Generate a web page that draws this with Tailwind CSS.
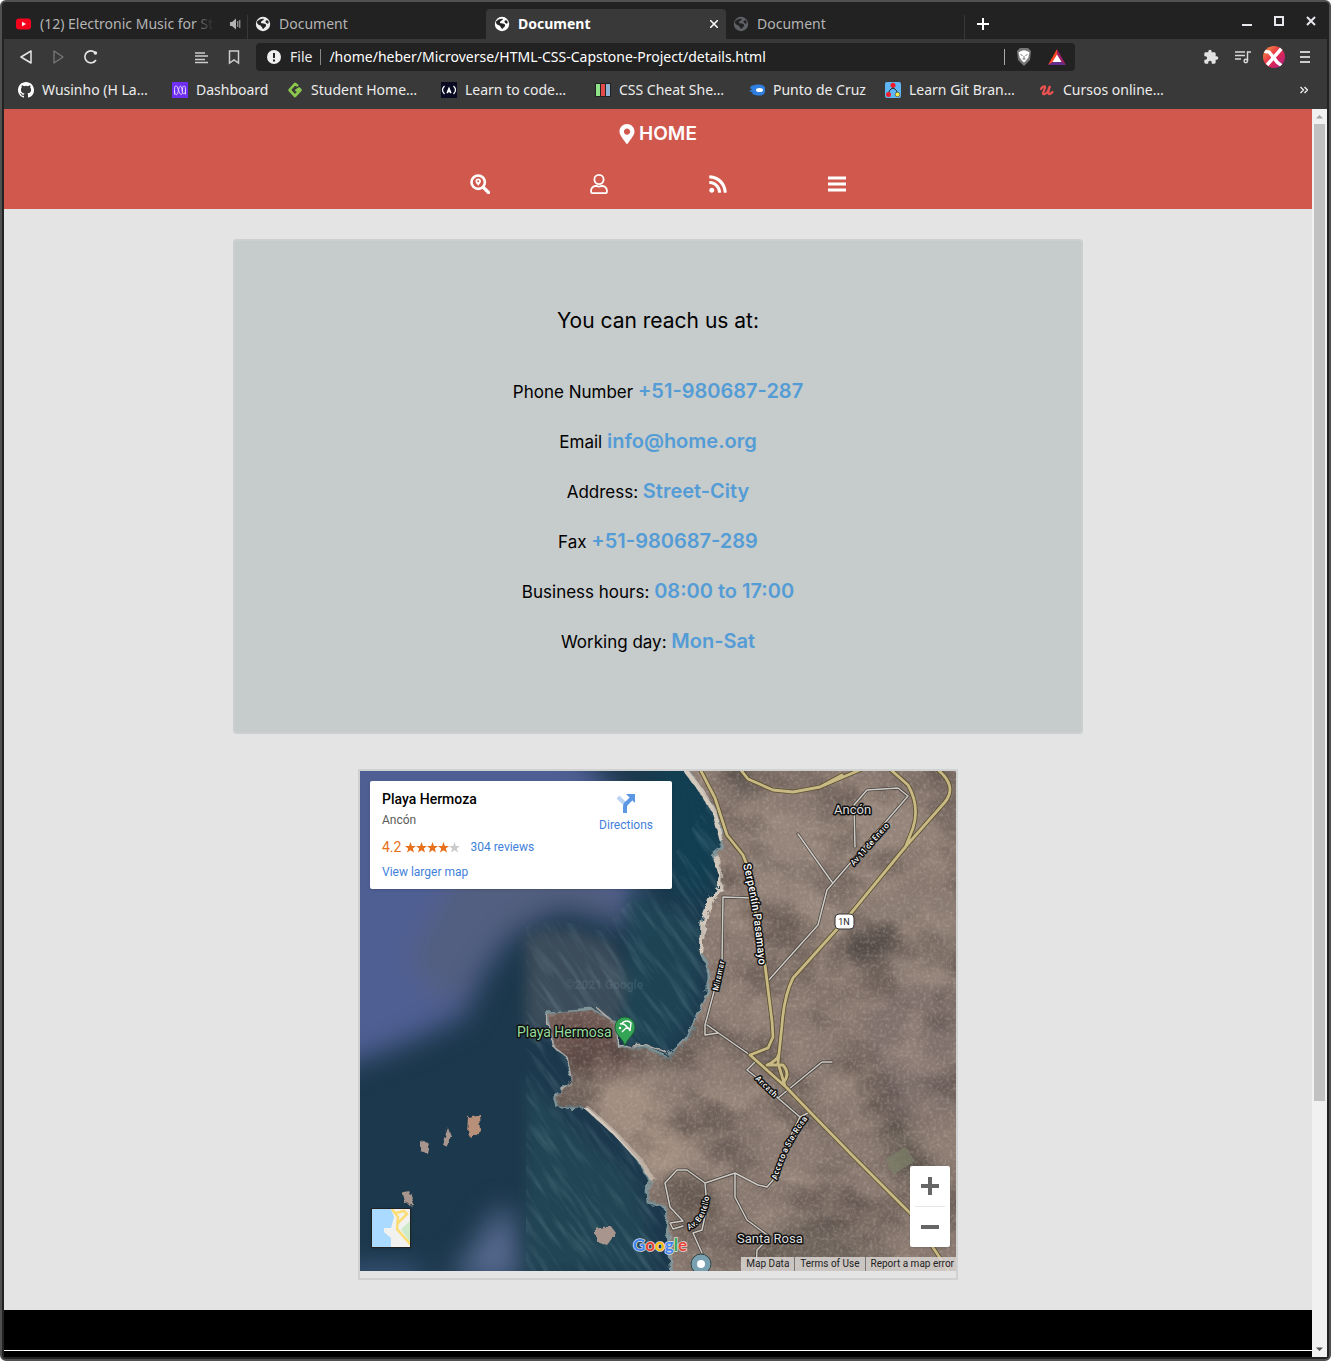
<!DOCTYPE html>
<html lang="en">
<head>
<meta charset="utf-8">
<title>Document</title>
<script src="https://cdn.jsdelivr.net/npm/@tailwindcss/browser@4"></script>
</head>
<body class="bg-white">
<svg class="hidden" aria-hidden="true">
  <symbol id="globe" viewBox="0 0 16 16"><circle cx="8" cy="8" r="7.2" fill="currentColor"/><path d="M2 5.500C4 3.500 7 2 9 3c-.5 1.500-3.500 2-3 4 1.500.8 4.500 0 5 2s-2 2.500-2.500 4c-1.500-.5-1.500-2.500-3-3.500S2 9 2 5.500zM10.500 5c1-1 2.500-.8 3 .5.5 1.500 0 2-1 2.200-1-.3-2.200-1.400-2-2.700z" fill="#222"/></symbol>
</svg>
<div class="flex min-h-screen flex-col rounded-md border-2 border-[#4f5050] bg-[#222] pr-[2px] pb-[2px] pl-[2px] font-['Noto_Sans',sans-serif]">

  <!-- Tab strip -->
  <div class="flex h-[37px] items-end text-sm text-[#b4b4b4]">
    <button class="flex h-[30px] w-[243px] items-center gap-2 pr-1 pl-3 text-left">
      <svg class="h-4 w-4 shrink-0" viewBox="0 0 16 16"><rect x="0" y="2.500" width="15" height="11" rx="3" fill="#f5001d"/><path d="M6 5.700v4.600L10 8z" fill="#fff"/></svg>
      <span class="min-w-0 flex-1 whitespace-nowrap">(12) Electronic Music for <span class="bg-gradient-to-r from-[#777] to-[#2c2c2c] bg-clip-text text-transparent">St</span></span>
      <svg class="h-4 w-4 shrink-0" viewBox="0 0 16 16" fill="none" stroke="#b4b4b4"><path d="M3 6h2l4-3.500v11L5 10H3z" fill="#b4b4b4" stroke="none"/><path d="M10.800 5v6M12.800 4v8"/></svg>
    </button>
    <span class="h-6 w-px bg-[#383838]"></span>
    <button class="flex h-[30px] w-[238px] items-center gap-2 pl-[7px]">
      <svg class="h-4 w-4 text-[#ececec]"><use href="#globe"/></svg>Document
    </button>
    <button class="flex h-[30px] w-[240px] items-center gap-2 rounded-t bg-[#393939] pr-2 pl-2 font-bold text-white">
      <svg class="h-4 w-4 text-white"><use href="#globe"/></svg><span class="flex-1 text-left">Document</span>
      <svg class="h-2 w-2" viewBox="0 0 8 8" stroke="#fff" stroke-width="1.500"><path d="M0 0l8 8M8 0L0 8"/></svg>
    </button>
    <button class="flex h-[30px] w-[238px] items-center gap-2 pl-[7px]">
      <svg class="h-4 w-4 text-[#5d6064]"><use href="#globe"/></svg>Document
    </button>
    <span class="h-6 w-px bg-[#383838]"></span>
    <button class="flex h-[30px] w-9 items-center justify-center" aria-label="New tab"><svg class="h-3 w-3" viewBox="0 0 12 12" stroke="#fff" stroke-width="2"><path d="M6 0v12M0 6h12"/></svg></button>
    <div class="ml-auto flex h-full items-center gap-[22px] pr-[11px]">
      <button aria-label="Minimize"><svg class="h-[10px] w-[10px]" viewBox="0 0 10 10" stroke="#e6e8ee" stroke-width="2"><path d="M0 9h10"/></svg></button>
      <button aria-label="Maximize"><svg class="h-[10px] w-[10px]" viewBox="0 0 10 10" fill="none" stroke="#e6e8ee" stroke-width="2"><path d="M1 1h8v8H1z"/></svg></button>
      <button aria-label="Close"><svg class="h-[10px] w-[10px]" viewBox="0 0 10 10" stroke="#e6e8ee" stroke-width="2"><path d="M1 1l8 8M9 1L1 9"/></svg></button>
    </div>
  </div>

  <!-- Toolbar -->
  <div class="flex h-9 items-center bg-[#393939] pr-[14px] pl-4">
    <div class="flex w-[236px] items-center">
      <button class="w-8" aria-label="Back"><svg class="h-4 w-4" viewBox="0 0 16 16" fill="none" stroke="#e5e5e5" stroke-width="1.500" stroke-linejoin="round"><path d="M11 2v12L1 8z"/></svg></button>
      <button class="w-8" aria-label="Forward"><svg class="h-4 w-4" viewBox="0 0 16 16" fill="none" stroke="#777" stroke-width="1.300" stroke-linejoin="round"><path d="M2 2v12l9-6z"/></svg></button>
      <button aria-label="Reload"><svg class="h-4 w-4" viewBox="0 0 16 16" fill="none" stroke="#e5e5e5" stroke-width="1.600"><path d="M11.500 4A6 6 0 1 0 12 11"/><circle cx="11.400" cy="4" r="1.800" fill="#e5e5e5" stroke="none"/></svg></button>
      <button class="mr-4 ml-auto" aria-label="Reader"><svg class="h-4 w-4" viewBox="0 0 16 16" stroke="#ccc" stroke-width="1.300"><path d="M1 4h10M1 7h13M1 10.500h10M1 13.500h13"/></svg></button>
      <button class="mr-[14px]" aria-label="Bookmark"><svg class="h-4 w-4" viewBox="0 0 16 16" fill="none" stroke="#ccc" stroke-width="1.500"><path d="M3.500 2h9v12L8 10.800 3.500 14z"/></svg></button>
    </div>
    <div class="flex h-7 max-w-[819px] min-w-0 flex-1 items-center rounded bg-[#222] pr-[9px] pl-[10px] text-sm text-[#ededed]">
      <svg class="mr-2 h-4 w-4" viewBox="0 0 16 16"><circle cx="8" cy="8" r="7" fill="#eee"/><path d="M8 4v5M8 10.500v2" stroke="#222" stroke-width="2"/></svg>
      <label for="url">File</label>
      <span class="mx-2 h-4 w-px bg-[#888]"></span>
      <input id="url" class="min-w-0 flex-1 bg-transparent text-white outline-none" value="/home/heber/Microverse/HTML-CSS-Capstone-Project/details.html">
      <span class="mr-[11px] h-4 w-px bg-[#aaa]"></span>
      <button class="mr-4" aria-label="Shields"><svg class="h-[18px] w-4" viewBox="0 0 16 18"><path d="M4 0h8l3 3-1 9-6 6-6-6-1-9z" fill="#777"/><path d="M5 3l3-.7L11 3l2.500 1.500-1.200 5-2.300 3.200L8 14.500 6 12.700 3.700 9.500l-1.200-5z" fill="#fff"/><path d="M4.500 6.500l2 1M11.500 6.500l-2 1M8 8v3M6.500 11h3" stroke="#777"/></svg></button>
      <button aria-label="Rewards"><svg class="h-4 w-[18px]" viewBox="0 0 18 16"><path d="M9 0L0 16l9-5z" fill="#ff4724"/><path d="M9 0l9 16-9-5z" fill="#9e1f63"/><path d="M0 16h18l-5-3H5z" fill="#662d91"/><path d="M9 5.500L13.500 13h-9z" fill="#fff"/></svg></button>
    </div>
    <div class="ml-auto flex items-center gap-4">
      <button aria-label="Extensions"><svg class="h-4 w-4" viewBox="0 0 24 24" fill="#e2e2e2"><path d="M20.500 11H19V7c0-1.100-.9-2-2-2h-4V3.500a2.500 2.500 0 0 0-5 0V5H4c-1.100 0-2 .9-2 2v3.800h1.500a2.700 2.700 0 0 1 0 5.400H2V20c0 1.100.9 2 2 2h3.800v-1.500a2.700 2.700 0 0 1 5.400 0V22H17c1.100 0 2-.9 2-2v-4h1.500a2.500 2.500 0 0 0 0-5z"/></svg></button>
      <button aria-label="Playlist"><svg class="h-4 w-4" viewBox="0 0 16 16" fill="none" stroke="#d8d8d8" stroke-width="1.500"><path d="M0 3h10M0 6.500h10M0 10h6M12.500 12V3H16"/><circle cx="10.800" cy="12" r="1.700"/></svg></button>
      <button class="-mx-1" aria-label="Profile"><svg class="h-[22px] w-[22px]" viewBox="0 0 22 22"><defs><linearGradient id="pf" x2="1" y2="1"><stop stop-color="#f7a63b"/><stop offset=".5" stop-color="#e8274b"/><stop offset="1" stop-color="#a4208c"/></linearGradient><clipPath id="pc"><circle cx="11" cy="11" r="11"/></clipPath></defs><g clip-path="url(#pc)"><path d="M0 0h22v22H0z" fill="url(#pf)"/><path d="M0 5l6 1 5 6 3 4 5 4M19 2L4 19" stroke="#fff" stroke-width="3.500" fill="none"/></g></svg></button>
      <button aria-label="Menu"><svg class="h-4 w-4" viewBox="0 0 16 16" stroke="#ccc" stroke-width="1.800"><path d="M3 3h10M3 8h10M3 13h10"/></svg></button>
    </div>
  </div>

  <!-- Bookmarks bar -->
  <nav class="flex h-[34px] items-center bg-[#393939] pr-[19px] pb-1 pl-[14px] text-sm whitespace-nowrap text-[#ececec]">
    <a href="#" class="flex w-[154px] items-center gap-2"><svg class="h-4 w-4" viewBox="0 0 16 16" fill="#fff"><path d="M8 0C3.580 0 0 3.580 0 8c0 3.540 2.290 6.530 5.470 7.590.4.070.55-.17.55-.38 0-.19-.01-.82-.01-1.490-2.010.37-2.530-.49-2.690-.94-.09-.23-.48-.94-.82-1.130-.28-.15-.68-.52-.01-.53.63-.01 1.080.58 1.230.82.72 1.210 1.870.87 2.330.66.07-.52.28-.87.51-1.070-1.780-.2-3.640-.89-3.640-3.950 0-.87.31-1.590.82-2.150-.08-.2-.36-1.020.08-2.120 0 0 .67-.21 2.200.82a7.600 7.600 0 0 1 4 0c1.530-1.040 2.200-.82 2.200-.82.44 1.100.16 1.920.08 2.120.51.56.82 1.270.82 2.150 0 3.070-1.870 3.750-3.650 3.950.29.25.54.73.54 1.480 0 1.070-.01 1.930-.01 2.200 0 .21.15.46.55.38A8.010 8.010 0 0 0 16 8c0-4.420-3.580-8-8-8z"/></svg>Wusinho (H La…</a>
    <a href="#" class="flex w-[115px] items-center gap-2"><svg class="h-4 w-4" viewBox="0 0 16 16"><path d="M0 0h16v16H0z" fill="#6f2ff2"/><path d="M2.500 12.500V7.500c0-5 2.500-5 3.700 0l1.300 3c1 3 3 2.500 3-1V7c0-4 3-4 3 0v5.500M2.500 8c0 6 3 6 3.700 1.500C7 3.500 9.500 2 10 8c.5 5 3.500 5 3.500 0" fill="none" stroke="#e6dcff" stroke-width=".9"/></svg>Dashboard</a>
    <a href="#" class="flex w-[154px] items-center gap-2"><svg class="h-4 w-4" viewBox="0 0 16 16" fill="none" stroke="#8cc84b" stroke-width="2.600" stroke-linejoin="round"><path d="M11 4L8 1.800 2.500 8 8 14l5.500-6L12 6.500 8.500 9"/></svg>Student Home…</a>
    <a href="#" class="flex w-[154px] items-center gap-2"><svg class="h-4 w-4" viewBox="0 0 16 16" fill="none" stroke="#fff" stroke-width="1.200"><path d="M0 0h16v16H0z" fill="#0a0a23" stroke="none"/><path d="M3.500 4C1 6.500 1 9.500 3.500 12M12.500 4c2.500 2.500 2.500 5.500 0 8"/><path d="M6 11l2-5 2 5-2-2z" fill="#fff"/></svg>Learn to code…</a>
    <a href="#" class="flex w-[154px] items-center gap-2"><svg class="h-4 w-4" viewBox="0 0 16 16"><path d="M0 1h16v14H0z" fill="#222"/><path d="M1 2h4v12H1z" fill="#8fe388"/><path d="M6 2h4v12H6z" fill="#e34b4b"/><path d="M11 2h4v12h-4z" fill="#8db4d6"/></svg>CSS Cheat She…</a>
    <a href="#" class="flex w-[136px] items-center gap-2"><svg class="h-4 w-4" viewBox="0 0 16 16"><path d="M2 4l5-1.500h4a5.500 5.500 0 0 1 0 11H8L3 12l1-1.500L0 9l3-1.500L1 6z" fill="#2e7fe0"/><ellipse cx="10.500" cy="8" rx="3.500" ry="2" fill="#fff"/></svg>Punto de Cruz</a>
    <a href="#" class="flex w-[154px] items-center gap-2"><svg class="h-4 w-4" viewBox="0 0 16 16"><rect width="16" height="16" rx="2" fill="#5fb6f5"/><path d="M8 3v4M8 6c-3 1-4 3-4.500 6M8 6c3 1 4 3 4.500 6" stroke="#222" fill="none"/><circle cx="8" cy="3.200" r="2.500" fill="#f11d28"/><circle cx="3.500" cy="12.500" r="2.500" fill="#f11d28"/><circle cx="12.500" cy="12.500" r="2.300" fill="#f5e94b" stroke="#222" stroke-width=".5"/></svg>Learn Git Bran…</a>
    <a href="#" class="flex items-center gap-2"><svg class="h-4 w-4" viewBox="0 0 16 16" fill="none" stroke="#ec5252" stroke-width="2.200" stroke-linecap="round"><path d="M2 7c1-2 3-3 4-2.500S4 10 4 11.500s3 .8 5-2.500l2-5c-1 3-2 6-1.500 7.500s3-.2 4-1.500"/></svg>Cursos online…</a>
    <button class="ml-auto" aria-label="More bookmarks"><svg class="h-2 w-2" viewBox="0 0 8 8" fill="none" stroke="#eee" stroke-width="1.400"><path d="M.5 1l3 3-3 3M4.500 1l3 3-3 3"/></svg></button>
  </nav>

  <!-- Page viewport -->
  <div class="flex flex-1">
    <div class="flex min-w-0 flex-1 flex-col bg-[#e4e4e4] font-[Inter,sans-serif] text-black">
      <header class="h-[100px] bg-[#d0584c] text-white">
        <a href="#" class="flex h-[50px] items-center justify-center gap-1 text-[19px] font-semibold"><svg class="h-5 w-4" viewBox="0 0 384 512" fill="#fff"><path d="M172.268 501.670C26.970 291.031 0 269.413 0 192 0 85.961 85.961 0 192 0s192 85.961 192 192c0 77.413-26.970 99.031-172.268 309.670-9.535 13.774-29.930 13.773-39.464 0zM192 272c44.183 0 80-35.817 80-80s-35.817-80-80-80-80 35.817-80 80 35.817 80 80 80z"/></svg>HOME</a>
        <nav class="mx-auto grid h-[50px] max-w-[476px] grid-cols-4 items-center justify-items-center">
          <a href="#" aria-label="Search"><svg class="h-5 w-5" viewBox="0 0 20 20" fill="none" stroke="#fff"><circle cx="8.200" cy="8.200" r="6.700" stroke-width="2.600"/><path d="M13.500 13.500l5 5" stroke-width="3.200" stroke-linecap="round"/><path d="M8.200 4.500a2.700 2.700 0 0 0-2.700 2.700c0 1.600 1.500 2.800 2.700 4.600 1.200-1.800 2.700-3 2.700-4.600a2.700 2.700 0 0 0-2.700-2.700zm0 1.700a1 1 0 1 1 0 2 1 1 0 0 1 0-2z" fill="#fff" fill-rule="evenodd" stroke="none"/></svg></a>
          <a href="#" aria-label="Account"><svg class="h-5 w-5" viewBox="0 0 20 20" fill="none" stroke="#fff" stroke-width="1.800"><circle cx="10" cy="5.500" r="4.600"/><path d="M6.500 12h1.200c1.500.7 3.100.7 4.600 0h1.200a4.400 4.400 0 0 1 4.400 4.400V18c0 .6-.4 1.100-1 1.100H3.100c-.6 0-1-.5-1-1.100v-1.600A4.400 4.400 0 0 1 6.500 12z"/></svg></a>
          <a href="#" aria-label="Feed"><svg class="h-5 w-[18px]" viewBox="0 0 448 512" fill="#fff"><path d="M128.081 415.959c0 35.369-28.672 64.041-64.041 64.041S0 451.328 0 415.959s28.672-64.041 64.041-64.041 64.040 28.673 64.040 64.041zm175.660 47.250c-8.354-154.600-132.185-278.587-286.950-286.950C7.656 175.765 0 183.105 0 192.253v48.069c0 8.415 6.490 15.472 14.887 16.018 111.832 7.284 201.473 96.702 208.772 208.772.547 8.397 7.604 14.887 16.018 14.887h48.069c9.149.001 16.489-7.655 15.995-16.790zm144.249.288C439.596 229.677 251.465 40.445 16.503 32.010 7.473 31.686 0 38.981 0 48.016v48.068c0 8.625 6.835 15.645 15.453 15.999 191.179 7.839 344.627 161.316 352.465 352.465.353 8.618 7.373 15.453 15.999 15.453h48.068c9.034-.001 16.329-7.474 16.005-16.504z"/></svg></a>
          <a href="#" aria-label="Menu"><svg class="h-5 w-[18px]" viewBox="0 0 18 20" stroke="#fff" stroke-width="2.800"><path d="M0 4h18M0 10h18M0 16h18"/></svg></a>
        </nav>
      </header>

      <main class="flex flex-col items-center gap-[35px] px-4 py-[30px]">
        <section class="w-full max-w-[850px] rounded border-2 border-[#cbcfcf] bg-[#c6cbcb] pt-[55px] pb-[65px] text-center text-[17px]">
          <h1 class="mb-[21px] text-[21px] leading-[50px]">You can reach us at:</h1>
          <p class="h-[50px] leading-[50px]">Phone Number <a href="#" class="text-xl leading-none font-semibold text-[#549cd6]">+51-980687-287</a></p>
          <p class="h-[50px] leading-[50px]">Email <a href="#" class="text-xl leading-none font-semibold text-[#549cd6]">info@home.org</a></p>
          <p class="h-[50px] leading-[50px]">Address: <a href="#" class="text-xl leading-none font-semibold text-[#549cd6]">Street-City</a></p>
          <p class="h-[50px] leading-[50px]">Fax <a href="#" class="text-xl leading-none font-semibold text-[#549cd6]">+51-980687-289</a></p>
          <p class="h-[50px] leading-[50px]">Business hours: <a href="#" class="text-xl leading-none font-semibold text-[#549cd6]">08:00 to 17:00</a></p>
          <p class="h-[50px] leading-[50px]">Working day: <a href="#" class="text-xl leading-none font-semibold text-[#549cd6]">Mon-Sat</a></p>
        </section>

        <section class="w-full max-w-[600px] border-2 border-[#d0d2d1] pb-[7px] font-[Roboto,sans-serif]">
          <div class="relative h-[500px] overflow-hidden">
            <svg class="h-full w-full" viewBox="0 0 596 500" preserveAspectRatio="xMidYMid slice">
              <defs>
                <filter id="soft" x="-30%" y="-30%" width="160%" height="160%" color-interpolation-filters="sRGB"><feGaussianBlur stdDeviation="14"/></filter>
                <filter id="haze" x="-30%" y="-30%" width="160%" height="160%" color-interpolation-filters="sRGB"><feGaussianBlur stdDeviation="7"/></filter>
                <!-- noise layers: white highlights or dark shade, carried by alpha -->
                <filter id="fine" x="0" y="0" width="100%" height="100%" color-interpolation-filters="sRGB"><feTurbulence type="fractalNoise" baseFrequency=".3" numOctaves="3" seed="4"/><feColorMatrix values="0 0 0 0 .8 0 0 0 0 .76 0 0 0 0 .72 2.500 0 0 0 -1.150"/></filter>
                <filter id="relief" x="0" y="0" width="100%" height="100%" color-interpolation-filters="sRGB"><feTurbulence type="fractalNoise" baseFrequency=".014 .022" numOctaves="5" seed="9"/><feColorMatrix values="0 0 0 0 .22 0 0 0 0 .19 0 0 0 0 .18 3 0 0 0 -1.350"/></filter>
                <filter id="light" x="0" y="0" width="100%" height="100%" color-interpolation-filters="sRGB"><feTurbulence type="fractalNoise" baseFrequency=".02 .03" numOctaves="5" seed="21"/><feColorMatrix values="0 0 0 0 .72 0 0 0 0 .64 0 0 0 0 .58 3 0 0 0 -1.400"/></filter>
                <filter id="wave" x="0" y="0" width="100%" height="100%" color-interpolation-filters="sRGB"><feTurbulence type="fractalNoise" baseFrequency=".02 .16" numOctaves="3" seed="2"/><feColorMatrix values="0 0 0 0 .55 0 0 0 0 .68 0 0 0 0 .72 2.500 0 0 0 -1.150"/></filter>
                <filter id="rough" x="-10%" y="-10%" width="120%" height="120%"><feTurbulence type="fractalNoise" baseFrequency=".12" numOctaves="3"/><feDisplacementMap in="SourceGraphic" scale="8"/></filter>
                <path id="coast" d="M325-5L338 14 353 36 362 61V77L353 84 360 101V117L350 127 342 151 340 181 348 194V221L337 244 327 269 307 286 285 276 258 277 255 251 232 239 208 241 187 243 195 276 208 286 212 309 195 326 198 336 228 337 255 362 278 389 292 412 287 419 288 431 305 436 308 462 312 505H605V-5z"/>
                <clipPath id="land"><use href="#coast"/></clipPath>
                <clipPath id="bay"><path d="M166 155Q200 145 240 160L310 90 370 0V500H166z"/></clipPath>
              </defs>
              <rect width="596" height="500" fill="#1c384c"/>
              <g filter="url(#soft)">
                <path d="M-30-30H210L290 60 270 155 200 138 150 165 122 205 105 245 40 275-30 300z" fill="#4f5f93"/>
                <path d="M110 80l130 20 40 50-80-12-60 30-50 70-40-50z" fill="#535f80"/>
                <path d="M140 435l14 10 8 65H90z" fill="#56698f"/>
                <path d="M-20 498H60v20H-20z" fill="#46608c"/>
                <path d="M290-20h60l20 100-30 60-30-20z" fill="#123f52"/>
              </g>
              <path d="M166 165Q205 150 250 172L275 215 255 260H166z" fill="#45525e" opacity=".8" filter="url(#haze)"/>
              <path d="M166 300l30 40 80 70 20 90H166z" fill="#234957" opacity=".8" filter="url(#haze)"/>
              <path d="M270 120l70 30-5 90-30 40-40-10z" fill="#1f4857" opacity=".8" filter="url(#haze)"/>
              <g clip-path="url(#bay)">
                <rect x="0" y="-300" width="900" height="900" filter="url(#wave)" opacity=".22" transform="rotate(55 280 250)"/>
              </g>
              <g filter="url(#rough)">
                <use href="#coast" fill="#897970" stroke="#7d9398" stroke-width="3"/>
                <path d="M326 0l14 18 14 22 8 30M355 84l6 20-1 14-9 10-8 26-2 28M225 335l30 27 25 27 13 20" fill="none" stroke="#d3c9bd" stroke-width="4.500"/>
                <path d="M186 243l8 33 14 10 4 22-16 20M236 236l20 18 3 22 26-2 22 8" fill="none" stroke="#b5aca6" stroke-width="1.500"/>
                <g fill="#a8958d"><path d="M108 346l12-3 1 17-9 8-5-6z" fill="#b88f79"/><path d="M60 370l9 2-2 10-7-2zM88 357l3 8-4 10-5-2zM42 420l7-1 4 14-7 1zM236 458l14-4 6 8-9 12-11-4z"/></g>
              </g>
              <g clip-path="url(#land)">
                <g filter="url(#haze)">
                  <path d="M185 240l60-5 15 40 20 20-40 10-50-10z" fill="#6d5651"/>
                  <path d="M210 310l70 0 50 60-20 50z" fill="#a08d80"/>
                  <path d="M395 30l50 20 80-30 40 30-90 110-80-40z" fill="#94847a"/>
                  <path d="M470 180l60-60 70 10v120l-60-30z" fill="#8b7c73"/>
                  <path d="M480 170l50-15 10 20-45 15z" fill="#655c56"/>
                  <path d="M370 0l15 0 20 30-25-5z" fill="#625a55"/>
                  <path d="M500 250l40-40 60 0v130l-70 10z" fill="#80716c"/>
                  <path d="M515 360l25-15 40 60-20 20z" fill="#5f564f"/>
                  <path d="M400 460l60-20 80 50 0 20H400z" fill="#6f645c"/>
                  <path d="M300 400l50 10 10 40-40 10z" fill="#675b53"/>
                </g>
                <rect x="-100" y="-100" width="900" height="800" filter="url(#relief)" opacity=".4" transform="rotate(25 300 250)"/>
                <rect x="-100" y="-100" width="900" height="800" filter="url(#light)" opacity=".3" transform="rotate(-25 300 250)"/>
                <rect x="180" width="416" height="500" filter="url(#fine)" opacity=".3"/>
                <path d="M525 388l20-12 10 14-22 14z" fill="#7e8069" opacity=".7"/>
              </g>
              <g fill="none" stroke-linejoin="round" stroke-linecap="round">
                <path id="minor" d="M438 63L472 111M548 25L467 119 458 154 407 211M495 76L494 34 507 19 538 17 548 25M392 127L363 126 362 191 345 254V264L358 262M347 254L390 284M395 291L387 299 400 309 418 327 440 346M418 327L462 291H472M450 341L440 346 427 372 413 409 407 416 398 414 375 402 345 412 327 399H317L305 412 310 436 323 450 310 452 313 458 323 455M375 402V426L387 449 410 466 397 479 396 500M345 412L347 435 342 459 333 462 342 482" stroke="#45413e" stroke-width="3"/>
                <path d="M438 63L472 111M548 25L467 119 458 154 407 211M495 76L494 34 507 19 538 17 548 25M392 127L363 126 362 191 345 254V264L358 262M347 254L390 284M395 291L387 299 400 309 418 327 440 346M418 327L462 291H472M450 341L440 346 427 372 413 409 407 416 398 414 375 402 345 412 327 399H317L305 412 310 436 323 450 310 452 313 458 323 455M375 402V426L387 449 410 466 397 479 396 500M345 412L347 435 342 459 333 462 342 482" stroke="#d0cbc4" stroke-width="1.500"/>
                <path d="M340-2L355 27 367 64 383 84 387 94 405 194 412 250 413 266 408 277 390 284M380-2L388 8 413 19 433 21 460 16 502-2M460 16L482 4M530-2L548 14Q560 35 553 57L545 77M577-2Q598 15 585 31L547 74 487 147 433 207Q424 225 422 254L418 292 425 315M390 284L427 317 450 341 490 382 550 442 590 502M407 294H423Q431 303 423 312M407 294Q417 290 419 283" stroke="#5a5030" stroke-width="4.500"/>
                <path d="M340-2L355 27 367 64 383 84 387 94 405 194 412 250 413 266 408 277 390 284M380-2L388 8 413 19 433 21 460 16 502-2M460 16L482 4M530-2L548 14Q560 35 553 57L545 77M577-2Q598 15 585 31L547 74 487 147 433 207Q424 225 422 254L418 292 425 315M390 284L427 317 450 341 490 382 550 442 590 502M407 294H423Q431 303 423 312M407 294Q417 290 419 283" stroke="#c8b985" stroke-width="2.800"/>
              </g>
              <defs>
                <path id="p1" d="M383 94Q396 140 400 215"/><path id="p2" d="M494 95L540 43"/><path id="p3" d="M358 220L367 180"/><path id="p4" d="M395 308L435 347"/><path id="p5" d="M417 409Q426 372 460 332"/><path id="p6" d="M329 459Q350 450 350 412"/>
              </defs>
              <g fill="#fff" stroke="#111" stroke-width="3" stroke-linejoin="round" class="[paint-order:stroke]">
                <text font-size="11" font-weight="500"><textPath href="#p1">Serpentín Pasamayo</textPath></text>
                <g font-size="8" font-weight="500"><text><textPath href="#p2">Av 11 de Enero</textPath></text><text><textPath href="#p3">Miramar</textPath></text><text><textPath href="#p4">Ancash</textPath></text><text><textPath href="#p5">Acceso a Sta. Rosa</textPath></text><text><textPath href="#p6">Av. Bertello</textPath></text></g>
                <g font-size="13" fill="#ddd"><text x="474" y="43">Ancón</text><text x="377" y="472">Santa Rosa</text></g>
                <text x="157" y="266" font-size="14" fill="#95dc9b">Playa Hermosa</text>
              </g>
              <text x="205" y="218" font-size="12" font-weight="700" fill="#9bb0b8" opacity=".15">©2021 Google</text>
              <rect x="475" y="143" width="19" height="15" rx="4" fill="#fff" stroke="#333"/><text x="484" y="154" text-anchor="middle" font-size="9" fill="#222">1N</text>
              <path d="M265 275c-2-8-10-11-10-19a10 10 0 0 1 20 0c0 8-8 11-10 19z" fill="#34a457" stroke="#1d5f38"/>
              <path d="M262 252q5-4 9 0l-1 8q-1-3-3-4l-5 5M260 253q4-1 7 3" stroke="#fff" stroke-width="1.400" fill="none"/><circle cx="260" cy="257" r="1.200" fill="#fff"/>
              <circle cx="341" cy="493" r="10" fill="#78a0b0" stroke="#344"/><circle cx="341" cy="493" r="4" fill="#fff"/>
              <text x="273" y="480" font-size="17" font-family="Lato" font-weight="700" stroke="#ddd" stroke-width="1.500" class="[paint-order:stroke]"><tspan fill="#4285f4">G</tspan><tspan fill="#ea4335">o</tspan><tspan fill="#fbbc05">o</tspan><tspan fill="#4285f4">g</tspan><tspan fill="#34a853">l</tspan><tspan fill="#ea4335">e</tspan></text>
            </svg>

            <div class="absolute top-[10px] left-[10px] flex h-[108px] w-[302px] justify-between rounded-[2px] bg-white px-3 py-2 text-xs shadow">
              <div>
                <h2 class="text-sm leading-5 font-medium">Playa Hermoza</h2>
                <p class="leading-[22px] text-[#5b5b5b]">Ancón</p>
                <div class="mt-[6px] flex h-5 items-center"><span class="text-sm text-[#e7711b]">4.2</span>
                  <svg class="ml-1 h-[11px] w-[55px]" viewBox="0 0 55 11"><defs><path id="star" d="M5.500 0l1.400 3.900 4.100.1-3.200 2.500L9 10.500 5.500 8.200 2 10.500l1.200-4L0 4l4.100-.1z"/></defs><g fill="#e7711b"><use href="#star"/><use href="#star" x="11"/><use href="#star" x="22"/><use href="#star" x="33"/></g><use href="#star" x="44" fill="#ccc"/></svg>
                  <a href="#" class="ml-[10px] text-[#427fdb]">304 reviews</a></div>
                <a href="#" class="mt-1 block leading-[22px] text-[#427fdb]">View larger map</a>
              </div>
              <a href="#" class="flex flex-col items-center pt-1 pr-[7px] text-[#427fdb]"><svg class="mb-1 h-5 w-5" viewBox="0 0 20 20" fill="none" stroke-width="4"><path d="M2 4l7 7" stroke="#b9d3f4"/><path d="M9 20v-6q0-3 3-5l4-4" stroke="#5c97e4"/><path d="M10 1h9v9z" fill="#5c97e4"/></svg>Directions</a>
            </div>

            <button aria-label="Show street map" class="absolute bottom-[23px] left-[11px] h-10 w-10 border border-[#222] bg-[#f1f1f0] shadow"><svg class="h-full w-full" viewBox="0 0 38 38"><path d="M0 0h19l3 8-3 11h-7v4l7 6v9H0z" fill="#aadaff"/><path d="M38 12v22L29 20z" fill="#cdeacb"/><path d="M20 0l6 8-1 12 14 16M25 15L35 5l-3-3-8 2" fill="none" stroke="#fbdd74" stroke-width="2.500"/></svg></button>

            <div class="absolute right-[6px] bottom-6 flex h-[81px] w-10 flex-col items-center rounded-[2px] bg-white shadow">
              <button aria-label="Zoom in" class="flex w-full flex-1 items-center justify-center"><svg class="h-[18px] w-[18px]" viewBox="0 0 18 18" stroke="#666" stroke-width="4"><path d="M9 0v18M0 9h18"/></svg></button>
              <span class="h-px w-[30px] bg-[#e6e6e6]"></span>
              <button aria-label="Zoom out" class="flex w-full flex-1 items-center justify-center"><svg class="h-[18px] w-[18px]" viewBox="0 0 18 18" stroke="#666" stroke-width="4"><path d="M0 9h18"/></svg></button>
            </div>

            <div class="absolute right-0 bottom-0 flex h-[14px] items-center divide-x divide-[#777] bg-[#e0dcd9]/80 text-[10px] leading-[14px] text-[#222]"><a href="#" class="px-[5px]">Map Data</a><a href="#" class="px-[5px]">Terms of Use</a><a href="#" class="pr-[2px] pl-[5px]">Report a map error</a></div>
          </div>
        </section>
      </main>

      <footer class="flex-1 bg-black pt-10"><hr class="border-white"></footer>
    </div>

    <!-- Scrollbar -->
    <div class="flex w-[15px] flex-col items-center bg-[#f1f1f1]">
      <svg class="h-[15px] w-[15px]" viewBox="0 0 15 15"><path d="M4 9.500h7L7.500 6z" fill="#a3a3a3"/></svg>
      <div class="w-[11px] bg-[#c1c1c1]" style="height:78.300%"></div>
      <svg class="mt-auto h-[15px] w-[15px]" viewBox="0 0 15 15"><path d="M4 5.500h7L7.500 9z" fill="#505050"/></svg>
    </div>
  </div>
</div>
</body>
</html>
